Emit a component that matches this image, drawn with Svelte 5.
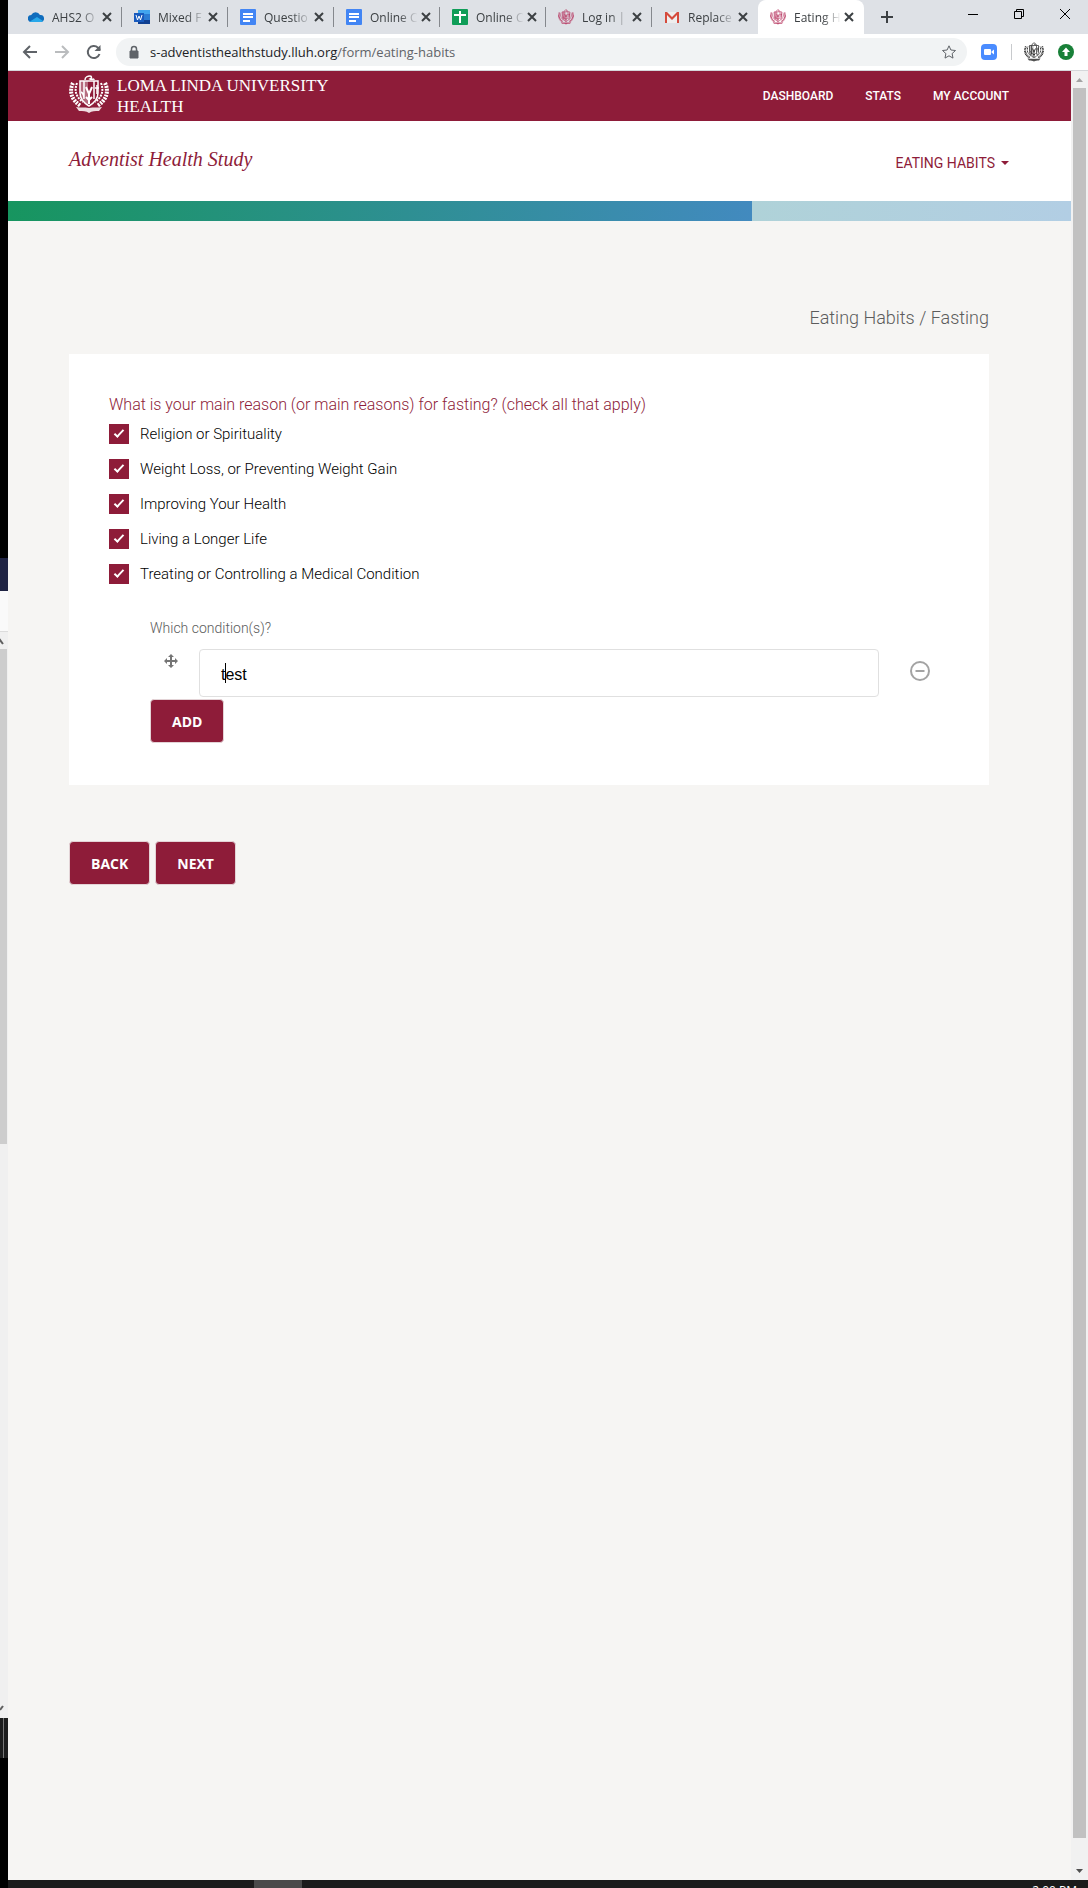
<script lang="ts">
	// Survey page for the fasting section, shown inside its browser window.
	type Tab = { icon: string; title: string };

	const tabs: Tab[] = [
		{ icon: 'cloud', title: 'AHS2 O' },
		{ icon: 'word', title: 'Mixed F' },
		{ icon: 'doc', title: 'Questio' },
		{ icon: 'doc', title: 'Online C' },
		{ icon: 'sheet', title: 'Online C' },
		{ icon: 'crest', title: 'Log in |' },
		{ icon: 'mail', title: 'Replace' },
		{ icon: 'crest', title: 'Eating H' }
	];
	const activeTab = tabs.length - 1;

	const progress = 70;

	let reasons = $state([
		{ label: 'Religion or Spirituality', checked: true },
		{ label: 'Weight Loss, or Preventing Weight Gain', checked: true },
		{ label: 'Improving Your Health', checked: true },
		{ label: 'Living a Longer Life', checked: true },
		{ label: 'Treating or Controlling a Medical Condition', checked: true }
	]);

	let conditions = $state([{ id: 1, text: 'test' }]);
	let nextId = 2;

	function addCondition() {
		conditions.push({ id: nextId++, text: '' });
	}

	function removeCondition(id: number) {
		conditions = conditions.filter((c) => c.id !== id);
	}
</script>

{#snippet crest()}
	<svg class="crest" viewBox="0 0 40 38" aria-hidden="true">
		<path d="M11 6h8v24c-5-3-8-7-8-12z" fill="currentColor" opacity=".35" />
		<g fill="none" stroke="currentColor" stroke-width="1.5">
			<path d="M11 6h18v12c0 6-4 10-9 13-5-3-9-7-9-13z" />
			<path d="M15 6v17M25 6v18M28 10v9M26 13h4M12 17c2 1 3 4 3 7" />
			<path d="M17 12l3 7 3-7M20 18v11M17 22l3 3 3-3" stroke-width="2" />
			<path d="M16 5c0-3 3-4 5-4s2 2 0 3c2 1 4-1 4 1" />
		</g>
		<g fill="none" stroke="currentColor" stroke-width="4" stroke-dasharray="2 1">
			<path d="M4 8c-4 8-2 17 8 23" />
			<path d="M36 8c4 8 2 17-8 23" />
		</g>
		<g fill="none" stroke="currentColor" stroke-width="2" stroke-dasharray="2 1">
			<path d="M8 8c-3 8-1 14 6 19M32 8c3 8 1 14-6 19" />
		</g>
		<path d="M7 32c5 1 8 0 13 1 5-1 8 0 13-1l-3 4c-4 0-7 0-10 2-3-2-6-2-10-2z" fill="currentColor" opacity=".85" />
	</svg>
{/snippet}

{#snippet favicon(name: string)}
	{#if name === 'crest'}
		<span class="favicon pink">{@render crest()}</span>
	{:else}
		<svg class="favicon" viewBox="0 0 16 16" aria-hidden="true">
			{#if name === 'cloud'}
				<path d="M3.5 13a3.5 3.5 0 0 1-.3-7A5 5 0 0 1 12 6a3.5 3.5 0 0 1 1 7z" fill="#0f6cbd" />
				<path d="M2 12.500 9 8l6 4a3 3 0 0 1-2 1H4a3 3 0 0 1-2-.5z" fill="#28a8ea" />
			{:else if name === 'word'}
				<path d="M4 1h12v14H4z" fill="#2b7cd3" />
				<path d="M4 1h12v4H4z" fill="#41a5ee" />
				<path d="M4 11h12v4H4z" fill="#103f91" />
				<path d="M0 4h10v9H0z" fill="#185abd" />
				<path d="m2 6 1.500 5L5 7l1.500 4L8 6" class="white" />
			{:else if name === 'doc'}
				<rect width="16" height="16" rx="1" fill="#4285f4" />
				<path d="M3 4h10v2H3zM3 7h10v2H3zM3 11h7v2H3z" fill="#fff" />
			{:else if name === 'sheet'}
				<rect width="16" height="16" rx="1" fill="#0f9d58" />
				<path d="M2 5h5V2h2v3h5v2H9v7H7V7H2z" fill="#fff" />
			{:else}
				<path d="M1 3h14v11H1z" fill="#eee" />
				<path d="M1 14V3h2l5 5 5-5h2v11h-2V6l-5 5-5-5v8z" fill="#d54b3d" />
			{/if}
		</svg>
	{/if}
{/snippet}

<div class="desktop">
	<!-- Sliver of the window that sits behind the browser -->
	<div class="behind" aria-hidden="true">
		<div class="black"></div>
		<div class="navy"></div>
		<div class="pale"></div>
		<div class="up"><svg viewBox="0 0 8 17"><path d="M0 9l0-1 3 4" stroke="#606060" stroke-width="2" fill="none" /></svg></div>
		<div class="thumb"></div>
		<div class="track"></div>
		<div class="down"><svg viewBox="0 0 8 17"><path d="M0 9l3-4" stroke="#606060" stroke-width="2" fill="none" /></svg></div>
		<div class="edge"></div>
		<div class="black last"></div>
	</div>

	<div class="window">
		<div class="tabstrip">
			{#each tabs as tab, i (i)}
				<div class="tab" class:active={i === activeTab} class:before={i === activeTab - 1}>
					{@render favicon(tab.icon)}
					<span class="tab-title">{tab.title}</span>
					<button class="plain tab-close" aria-label="Close tab">
						<svg class="line" viewBox="0 0 16 16"><path d="M4 4l8 8M12 4l-8 8" /></svg>
					</button>
				</div>
			{/each}
			<button class="plain new-tab" aria-label="New tab">
				<svg class="line" viewBox="0 0 16 16"><path d="M8 2v12M2 8h12" /></svg>
			</button>
			<div class="controls">
				<button class="plain" aria-label="Minimize"><svg viewBox="0 0 12 12"><path d="M1 6.500h10" /></svg></button>
				<button class="plain" aria-label="Restore"><svg viewBox="0 0 12 12"><path d="M1.500 3.500h7v7h-7zM3.500 3.500v-2h7v7h-2" /></svg></button>
				<button class="plain" aria-label="Close"><svg viewBox="0 0 12 12"><path d="M1 1l10 10M11 1L1 11" /></svg></button>
			</div>
		</div>

		<div class="toolbar">
			<button class="plain tool" aria-label="Back"><svg class="line" viewBox="0 0 16 16"><path d="M15 8H2M8 2L2 8l6 6" /></svg></button>
			<button class="plain tool dim" aria-label="Forward"><svg class="line" viewBox="0 0 16 16"><path d="M1 8h13M8 2l6 6-6 6" /></svg></button>
			<button class="plain tool" aria-label="Reload"><svg class="line" viewBox="0 0 16 16"><path d="M13.500 10A6 6 0 1 1 12 3.700L14 6" /><path d="M14.500 1v6h-6z" class="solid" /></svg></button>
			<div class="omnibox">
				<svg class="lock" viewBox="0 0 12 14" aria-hidden="true"><path d="M2 6h8v7H2z" fill="#5f6368" stroke="#5f6368" /><path d="M3.500 6V4a2.500 2.500 0 0 1 5 0v2" fill="none" stroke="#5f6368" stroke-width="1.500" /></svg>
				<span class="url">s-adventisthealthstudy.lluh.org<span>/form/eating-habits</span></span>
				<button class="plain star" aria-label="Bookmark this page"><svg viewBox="0 0 16 16"><path d="M8 1.800l1.900 4.200 4.600.5-3.400 3.100.9 4.500L8 11.800l-4 2.300.9-4.500L1.500 6.500 6.100 6z" /></svg></button>
			</div>
			<svg class="ext" viewBox="0 0 16 16" aria-hidden="true"><rect width="16" height="16" rx="4" fill="#4a8cff" /><rect x="3" y="5" width="7" height="6" rx="1" fill="#fff" /><path d="M10.500 7.500L13 5.500v5l-2.500-2z" fill="#fff" /></svg>
			<span class="divider"></span>
			<span class="avatar">{@render crest()}</span>
			<svg class="ext" viewBox="0 0 16 16" aria-hidden="true"><circle cx="8" cy="8" r="8" fill="#188038" /><path d="M8 3.500L12 8H9.500v4h-3V8H4z" fill="#fff" /></svg>
		</div>

		<div class="viewport">
			<div class="page">
				<header class="brand-bar">
					<a class="brand" href="#home">
						{@render crest()}
						<span>LOMA LINDA UNIVERSITY<br />HEALTH</span>
					</a>
					<nav>
						<a href="#dashboard">DASHBOARD</a>
						<a href="#stats">STATS</a>
						<a href="#account">MY ACCOUNT</a>
					</nav>
				</header>

				<div class="study-bar">
					<a class="study" href="#study">Adventist Health Study</a>
					<button class="plain section">EATING HABITS <span class="caret"></span></button>
				</div>

				<div class="progress" role="progressbar" aria-label="Survey progress" aria-valuenow={progress}>
					<div class="bar" style="width: {progress}%"></div>
				</div>

				<main>
					<p class="crumb">Eating Habits / Fasting</p>

					<section class="card">
						<fieldset>
							<legend>What is your main reason (or main reasons) for fasting? (check all that apply)</legend>
							{#each reasons as reason (reason.label)}
								<label class="reason">
									<input type="checkbox" bind:checked={reason.checked} />
									<span>{reason.label}</span>
								</label>
							{/each}
						</fieldset>

						<div class="conditions">
							<p id="which">Which condition(s)?</p>
							{#each conditions as condition, i (condition.id)}
								<div class="condition">
									<svg class="move" viewBox="0 0 14 14" aria-hidden="true">
										<path d="M7 2v10M2 7h10" stroke="#757575" stroke-width="2" />
										<path d="M7 0l3 3H4zM7 14l3-3H4zM0 7l3-3v6zM14 7l-3-3v6z" fill="#757575" />
									</svg>
									<div class="field">
										<input type="text" aria-labelledby="which" bind:value={condition.text} />
										{#if i === 0}<span class="cursor"></span>{/if}
									</div>
									<button class="plain remove" aria-label="Remove condition" onclick={() => removeCondition(condition.id)}>
										<svg viewBox="0 0 20 20"><circle cx="10" cy="10" r="9" /><path d="M5.500 10h9" /></svg>
									</button>
								</div>
							{/each}
							<button class="btn" onclick={addCondition}>ADD</button>
						</div>
					</section>

					<div class="actions">
						<button class="btn">BACK</button>
						<button class="btn">NEXT</button>
					</div>
				</main>
			</div>

			<div class="scrollbar" aria-hidden="true">
				<svg viewBox="0 0 17 17"><path d="M5 11l3.500-4 3.500 4z" fill="#a3a3a3" /></svg>
				<div class="handle"></div>
				<div class="rest"></div>
				<svg viewBox="0 0 17 17"><path d="M5 6h7l-3.500 4z" fill="#505050" /></svg>
			</div>
		</div>

		<div class="taskbar"><span class="running"></span><span class="clock">2:00 PM</span></div>
	</div>
</div>

<style>
	:global(body) {
		margin: 0;
	}

	.desktop {
		--brand: #8e1c39;
		display: flex;
		min-height: 100vh;
		background: #f6f5f3;
		font-family: Roboto, 'Liberation Sans', sans-serif;
	}

	.desktop *,
	.desktop *::before {
		box-sizing: border-box;
	}

	svg {
		display: block;
	}

	a {
		color: inherit;
		text-decoration: none;
	}

	.plain {
		display: flex;
		align-items: center;
		justify-content: center;
		padding: 0;
		border: 0;
		background: none;
		font: inherit;
		color: inherit;
	}

	.line {
		width: 16px;
		fill: none;
		stroke: currentColor;
		stroke-width: 2;
	}

	/* window behind */
	.behind {
		display: flex;
		flex-direction: column;
		flex: none;
		width: 8px;
		background: #f0f0f0;
	}

	.behind .black {
		flex: 558;
		background: #000;
	}

	.behind .navy {
		height: 33px;
		background: #1f2343;
	}

	.behind .pale {
		height: 41px;
		border-bottom: 1px solid #dcdcdc;
		background: #fafafa;
	}

	.behind .up,
	.behind .down {
		height: 17px;
	}

	.behind .thumb {
		flex: 495;
		margin-right: 1px;
		background: #cdcdcd;
	}

	.behind .track {
		flex: 557;
	}

	.behind .edge {
		height: 40px;
		border-right: 4px solid #1d1d1d;
		border-left: 3px solid #1d1d1d;
		background: #777;
	}

	.behind .last {
		flex: 130;
	}

	.window {
		display: flex;
		flex: 1;
		flex-direction: column;
		min-width: 0;
	}

	/* browser chrome */
	.tabstrip {
		display: flex;
		align-items: center;
		height: 34px;
		padding-left: 8px;
		background: #dee1e6;
		color: #3c4043;
		font: 12px 'Open Sans', 'Noto Sans', sans-serif;
	}

	.tab {
		display: flex;
		align-items: center;
		flex: 0 1 106px;
		min-width: 0;
		height: 20px;
		padding: 0 6px 0 12px;
		border-right: 1px solid #85888d;
	}

	.tab.before {
		border-color: transparent;
	}

	.tab.active {
		height: 34px;
		border-color: transparent;
		border-radius: 8px 8px 0 0;
		background: #fff;
	}

	.favicon {
		flex: none;
		width: 16px;
		height: 16px;
		margin-right: 8px;
	}

	.favicon .white {
		fill: none;
		stroke: #fff;
	}

	.pink {
		color: #b5315c;
	}

	.crest {
		width: 100%;
		height: 100%;
	}

	.tab-title {
		flex: 1;
		white-space: nowrap;
		mask-image: linear-gradient(90deg, #000 60%, transparent);
	}

	.tab-close {
		flex: none;
		width: 16px;
		height: 16px;
	}

	.new-tab {
		width: 16px;
		margin-left: 15px;
	}

	.controls {
		display: flex;
		margin: 0 0 6px auto;
		color: #000;
	}

	.controls button {
		width: 46px;
		height: 28px;
	}

	.controls svg {
		width: 12px;
		fill: none;
		stroke: currentColor;
	}

	.toolbar {
		display: flex;
		align-items: center;
		height: 37px;
		padding: 0 14px;
		border-bottom: 1px solid #d5d7da;
		background: #fff;
		color: #5f6368;
	}

	.tool {
		flex: none;
		width: 16px;
		margin-right: 16px;
	}

	.tool.dim {
		color: #babcbe;
	}

	.tool .solid {
		fill: currentColor;
		stroke: none;
	}

	.omnibox {
		display: flex;
		align-items: center;
		flex: 1;
		min-width: 0;
		height: 28px;
		margin: 0 14px 0 -2px;
		padding: 0 10px 0 12px;
		border-radius: 14px;
		background: #f1f3f4;
		font: 13px 'Open Sans', 'Noto Sans', sans-serif;
	}

	.lock {
		width: 12px;
		margin-right: 10px;
	}

	.url {
		color: #202124;
		white-space: nowrap;
	}

	.url span {
		color: #5f6368;
	}

	.star {
		width: 16px;
		margin-left: auto;
	}

	.star svg {
		width: 16px;
		fill: none;
		stroke: currentColor;
	}

	.ext {
		flex: none;
		width: 16px;
	}

	.divider {
		width: 1px;
		height: 16px;
		margin: 0 12px 0 14px;
		background: #c8cacd;
	}

	.avatar {
		flex: none;
		width: 20px;
		height: 20px;
		margin-right: 14px;
		color: #333;
	}

	/* web page */
	.viewport {
		display: flex;
		flex: 1;
	}

	.page {
		flex: 1;
		min-width: 0;
	}

	.brand-bar,
	.study-bar {
		display: flex;
		align-items: center;
		justify-content: space-between;
		padding: 0 62px 0 61px;
	}

	.brand-bar {
		height: 50px;
		background: var(--brand);
		color: #fff;
	}

	.brand {
		display: flex;
		align-items: center;
		gap: 8px;
		margin-bottom: 4px;
		font: 17px/21px 'Liberation Serif', serif;
	}

	.brand span {
		padding-top: 3px;
	}

	.brand :global(.crest) {
		width: 40px;
		height: 38px;
	}

	nav {
		display: flex;
		gap: 32px;
		font-size: 12px;
		font-weight: 500;
	}

	.study-bar {
		height: 80px;
		background: #fff;
		color: var(--brand);
	}

	.study {
		padding-bottom: 3px;
		font: italic 20px 'Liberation Serif', serif;
	}

	.section {
		gap: 6px;
		padding-top: 4px;
		font-size: 14px;
	}

	.caret {
		border: 4px solid transparent;
		border-top-color: currentColor;
		border-bottom: 0;
	}

	.progress {
		height: 20px;
		background: linear-gradient(90deg, #a2d5bf, #afd2d8 70%, #b2cee4);
	}

	.bar {
		height: 100%;
		background: linear-gradient(90deg, #17955f, #428abf);
	}

	main {
		padding: 84px 82px 60px 61px;
	}

	.crumb {
		margin: 0 0 24px;
		color: #5c5c5c;
		font-size: 18px;
		font-weight: 300;
		line-height: 25px;
		text-align: right;
	}

	.card {
		padding: 39px 40px 42px;
		background: #fff;
	}

	fieldset {
		margin: 0;
		padding: 0;
		border: 0;
	}

	legend {
		padding: 0 0 7px;
		color: var(--brand);
		font-size: 16px;
		font-weight: 300;
		line-height: 24px;
	}

	.reason {
		display: flex;
		align-items: center;
		gap: 11px;
		width: fit-content;
		margin-bottom: 15px;
		color: #000;
		font-size: 15px;
		font-weight: 300;
		line-height: 20px;
	}

	.reason input {
		width: 20px;
		height: 20px;
		margin: 0;
		appearance: none;
		border: 1px solid var(--brand);
		background: #fff;
	}

	.reason input:checked {
		display: grid;
		place-items: center;
		background: var(--brand);
	}

	.reason input:checked::before {
		width: 10px;
		height: 5px;
		margin-bottom: 3px;
		border: solid #fff;
		border-width: 0 0 2px 2px;
		content: '';
		transform: rotate(-47deg);
	}

	.conditions {
		padding: 19px 0 0 41px;
	}

	.conditions p {
		margin: 0 0 11px;
		color: #5c5c5c;
		font-size: 14px;
		font-weight: 300;
		line-height: 20px;
	}

	.condition {
		display: flex;
		align-items: flex-start;
		margin-bottom: 2px;
	}

	.move {
		width: 14px;
		margin: 5px 21px 0 14px;
	}

	.field {
		position: relative;
		flex: 1;
	}

	.field input {
		width: 100%;
		height: 48px;
		padding: 4px 21px 0;
		border: 1px solid #e0e0e0;
		border-radius: 4px;
		background: #fff;
		color: #000;
		font: 16px 'Liberation Sans', sans-serif;
	}

	.cursor {
		position: absolute;
		top: 14px;
		left: 26px;
		width: 1px;
		height: 20px;
		background: #000;
	}

	.remove {
		width: 20px;
		margin: 12px 19px 0 31px;
	}

	.remove svg {
		width: 20px;
		fill: none;
		stroke: #a3a3a3;
		stroke-width: 2;
	}

	.btn {
		height: 44px;
		padding: 0 21px;
		border: 1px solid #e3d3d6;
		border-radius: 4px;
		background: var(--brand);
		color: #fff;
		font: bold 14px 'Open Sans', sans-serif;
	}

	.actions {
		display: flex;
		gap: 5px;
		margin-top: 56px;
	}

	.scrollbar {
		display: flex;
		flex-direction: column;
		flex: none;
		width: 17px;
		background: #f1f1f1;
	}

	.handle {
		flex: 1750;
		margin: 0 2px;
		background: #c1c1c1;
	}

	.rest {
		flex: 25;
	}

	/* only the top of the taskbar is in view */
	.taskbar {
		display: flex;
		height: 8px;
		padding: 0 11px 0 246px;
		overflow: hidden;
		background: #1b1b1b;
	}

	.running {
		width: 48px;
		background: #4a4a4a;
	}

	.clock {
		margin: 2px 0 0 auto;
		color: #fff;
		font: 12px 'Open Sans', sans-serif;
	}
</style>
